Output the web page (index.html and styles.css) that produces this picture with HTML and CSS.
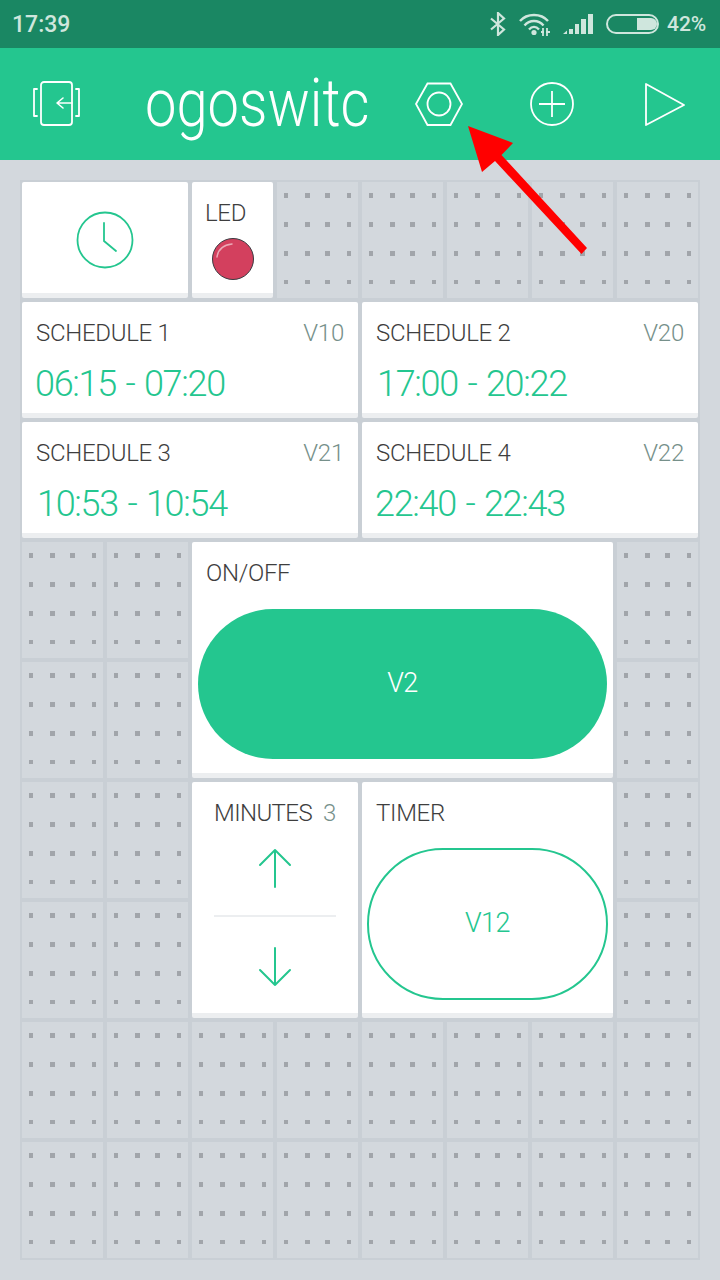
FILE: index.html
```html
<!DOCTYPE html>
<html lang="en">
<head>
<meta charset="utf-8">
<title>ogoswitc</title>
<link rel="stylesheet" href="styles.css">
</head>
<body>
<div class="status">
  <span class="clock-text">17:39</span>
  <svg class="st-bt" width="16" height="24" viewBox="0 0 16 24"><path d="M1 6.500 14 17.500 8 23V1l6 5.500L1 17.500" fill="none" stroke="currentColor" stroke-width="2.200"/></svg>
  <svg class="st-wifi" width="32" height="24" viewBox="0 0 32 24"><g fill="none" stroke="currentColor" stroke-width="2.400"><path d="M1 9C8 1 22 1 29 9"/><path d="M5.500 13.500C10.500 7.500 19.500 7.500 24.500 13.500"/><path d="M10 17.500C13 14 17 14 20 17.500"/></g><circle cx="15" cy="20.500" r="2.600" fill="currentColor"/><path d="M24 16v8M28 16v8M22 20h3M27 20h4" stroke="currentColor" stroke-width="1.800" fill="none"/></svg>
  <svg class="st-sig" width="31" height="22" viewBox="0 0 31 22"><path d="M0 21 4 17.500V21ZM6 16h4v5H6ZM12 11h4v10h-4ZM18 6h5v15h-5ZM25 1h5v20h-5Z" fill="currentColor"/></svg>
  <svg class="st-bat" width="54" height="21" viewBox="0 0 54 21"><rect x="1" y="1" width="51" height="18" rx="9" fill="none" stroke="currentColor" stroke-width="2"/><path d="M31 4h14a6 6 0 0 1 0 12H31Z" fill="currentColor"/></svg>
  <span class="pct">42%</span>
</div>

<header class="bar">
  <svg class="i-sync" width="47" height="46" viewBox="0 0 47 46"><g fill="none" stroke="#fff" stroke-width="1.800" stroke-linejoin="round" stroke-linecap="round"><rect x="8" y="1" width="31" height="43" rx="3"/><path d="M4 8H1V35H4M43 8h3V35h-3"/><path d="M39 22H24M30 17l-6 5 6 5" stroke-width="1.600"/></g></svg>
  <div class="title">ogoswitc</div>
  <svg class="i-hex" width="48" height="44" viewBox="0 0 48 44"><g fill="none" stroke="#fff" stroke-width="1.800"><path d="M1 22 12.500 1.500H35.500L47 22 35.500 43H12.500Z"/><circle cx="24" cy="22" r="11.500"/></g></svg>
  <svg class="i-plus" width="44" height="44" viewBox="0 0 44 44"><g fill="none" stroke="#fff" stroke-width="1.800"><circle cx="22" cy="22" r="21"/><path d="M9 22H35M22 9V35"/></g></svg>
  <svg class="i-play" width="42" height="44" viewBox="0 0 42 44"><path d="M2 2 40 23 2 43Z" fill="none" stroke="#fff" stroke-width="1.800" stroke-linejoin="round"/></svg>
</header>

<main class="board">
  <div class="card w2 center">
    <svg width="58" height="58" viewBox="0 0 58 58"><g fill="none" stroke="#24c68f" stroke-width="1.800" stroke-linecap="round"><circle cx="29" cy="29" r="27.500"/><path d="M28 12V30L40 40"/></g></svg>
  </div>
  <div class="card led">
    <div class="label">LED</div>
    <svg class="led-lamp" width="44" height="44" viewBox="0 0 44 44"><circle cx="22" cy="22" r="20.500" fill="#d3405e" stroke="#3a3a40" stroke-width="1"/><path d="M6 20C7 13 12 8 21 7" fill="none" stroke="#eba9b6" stroke-width="1.500" stroke-linecap="round"/></svg>
  </div>
  <div class="cell"></div><div class="cell"></div><div class="cell"></div><div class="cell"></div><div class="cell"></div>

  <div class="card w4 sched">
    <div class="sched-top"><span class="label">SCHEDULE 1</span><span class="pin">V10</span></div>
    <div class="time">06:15 - 07:20</div>
  </div>
  <div class="card w4 sched">
    <div class="sched-top"><span class="label">SCHEDULE 2</span><span class="pin">V20</span></div>
    <div class="time shift">17:00 - 20:22</div>
  </div>
  <div class="card w4 sched">
    <div class="sched-top"><span class="label">SCHEDULE 3</span><span class="pin">V21</span></div>
    <div class="time shift">10:53 - 10:54</div>
  </div>
  <div class="card w4 sched">
    <div class="sched-top"><span class="label">SCHEDULE 4</span><span class="pin">V22</span></div>
    <div class="time">22:40 - 22:43</div>
  </div>

  <div class="cell"></div><div class="cell"></div>
  <div class="card w5 h2 button-card">
    <div class="label">ON/OFF</div>
    <div class="pill solid">V2</div>
  </div>
  <div class="cell"></div>
  <div class="cell"></div><div class="cell"></div><div class="cell"></div>

  <div class="cell"></div><div class="cell"></div>
  <div class="card w2 h2 stepper">
    <div class="step-top"><span class="label">MINUTES</span><span class="pin">3</span></div>
    <svg class="arrow-up" width="34" height="40" viewBox="0 0 34 40"><path d="M17 39V2M2 17 17 2 32 17" fill="none" stroke="#24c68f" stroke-width="2" stroke-linecap="round" stroke-linejoin="round"/></svg>
    <div class="divider"></div>
    <svg class="arrow-down" width="34" height="40" viewBox="0 0 34 40"><path d="M17 1V38M2 23 17 38 32 23" fill="none" stroke="#24c68f" stroke-width="2" stroke-linecap="round" stroke-linejoin="round"/></svg>
  </div>
  <div class="card w3 h2 timer-card">
    <div class="label">TIMER</div>
    <div class="pill outline">V12</div>
  </div>
  <div class="cell"></div>
  <div class="cell"></div><div class="cell"></div><div class="cell"></div>

  <div class="cell"></div><div class="cell"></div><div class="cell"></div><div class="cell"></div><div class="cell"></div><div class="cell"></div><div class="cell"></div><div class="cell"></div>
  <div class="cell"></div><div class="cell"></div><div class="cell"></div><div class="cell"></div><div class="cell"></div><div class="cell"></div><div class="cell"></div><div class="cell"></div>
</main>

<svg class="pointer" width="130" height="135" viewBox="0 0 130 135"><path d="M2 0 47 17 35.500 29 121 122 115.500 128 29 35 16 46Z" fill="#ff0000"/></svg>
</body>
</html>
```
FILE: styles.css
```css
* { box-sizing: border-box; }
html, body { margin: 0; padding: 0; }
body {
  width: 720px;
  height: 1280px;
  overflow: hidden;
  position: relative;
  background: #d3d8dd;
  font-family: "Roboto", "Liberation Sans", sans-serif;
}

.status {
  height: 48px;
  background: #1a8763;
  color: #cfe6dd;
  display: flex;
  align-items: center;
  padding-left: 12px;
}
.clock-text { font-size: 23px; font-weight: 500; width: 478px; }
.st-bt { margin-right: 13px; }
.st-wifi { margin-right: 12px; }
.st-sig { margin-right: 12px; }
.st-bat { margin-right: 7px; }
.pct { font-size: 21px; font-weight: 500; }

.bar {
  height: 112px;
  background: #24c68f;
  display: flex;
  align-items: center;
  padding-left: 33px;
}
.title {
  width: 226px;
  margin-left: 65px;
  white-space: nowrap;
  color: #fff;
  font-size: 66px;
  font-weight: 300;
  line-height: 80px;
  transform: scaleX(0.85);
  transform-origin: left center;
}
.i-hex { margin-left: 44px; }
.i-plus { margin-left: 67px; }
.i-play { margin-left: 70px; }

.board {
  margin: 20px 0 0 20px;
  width: 680px;
  height: 1080px;
  padding: 2px;
  display: grid;
  grid-template-columns: repeat(8, 81px);
  grid-template-rows: repeat(9, 116px);
  gap: 4px;
  background: #c9cfd5;
}
.cell {
  background-color: #d3d8dd;
  background-image: url("data:image/svg+xml,%3Csvg xmlns='http://www.w3.org/2000/svg' width='81' height='116'%3E%3Cg fill='%23a1a5aa'%3E%3Cpath d='M7 11h4v5H7zM28 11h5v5h-5zM48 11h5v5h-5zM70 11h4v5h-4zM7 40h4v5H7zM28 40h5v5h-5zM48 40h5v5h-5zM70 40h4v5h-4zM7 69h4v5H7zM28 69h5v5h-5zM48 69h5v5h-5zM70 69h4v5h-4zM7 98h4v4H7zM28 98h5v4h-5zM48 98h5v4h-5zM70 98h4v4h-4z'/%3E%3C/g%3E%3C/svg%3E");
  background-repeat: no-repeat;
}
.card {
  background: #fff;
  border-bottom: 5px solid #eceef0;
  border-radius: 2px;
}
.w2 { grid-column: span 2; }
.w3 { grid-column: span 3; }
.w4 { grid-column: span 4; }
.w5 { grid-column: span 5; }
.h2 { grid-row: span 2; }
.center { display: flex; align-items: center; justify-content: center; padding-top: 4px; }

.label {
  font-size: 24px;
  font-weight: 300;
  color: #3e3e3e;
  line-height: 28px;
  letter-spacing: -0.300px;
}
.pin {
  font-size: 24px;
  font-weight: 300;
  color: #76908a;
  line-height: 28px;
  letter-spacing: -0.200px;
}

.led { padding: 17px 0 0 13px; }
.led-lamp { display: block; margin: 10px 0 0 6px; }

.sched { padding: 17px 14px 0; }
.sched-top { display: flex; justify-content: space-between; }
.time {
  margin-top: 15px;
  margin-left: -1px;
  color: #24c68f;
  font-size: 36px;
  font-weight: 300;
  letter-spacing: -1.300px;
  word-spacing: 2px;
  line-height: 44px;
}
.shift { padding-left: 2px; }

.button-card { padding: 17px 6px 0; display: flex; flex-direction: column; }
.button-card .label { padding-left: 8px; }
.pill {
  display: flex;
  align-items: center;
  justify-content: center;
  font-size: 27px;
  font-weight: 300;
  letter-spacing: -0.500px;
}
.solid {
  margin-top: 22px;
  height: 150px;
  border-radius: 75px;
  background: #24c68f;
  color: #fff;
  padding-bottom: 2px;
}
.timer-card { padding: 17px 5px 0; }
.timer-card .label { padding-left: 9px; }
.outline {
  margin-top: 21px;
  height: 152px;
  border-radius: 76px;
  border: 2px solid #24c68f;
  color: #24c68f;
  padding-bottom: 2px;
}

.stepper { padding: 17px 22px 0; display: flex; flex-direction: column; align-items: center; }
.step-top { width: 100%; display: flex; justify-content: space-between; }
.step-top .label { letter-spacing: -0.600px; }
.arrow-up { margin-top: 21px; }
.divider { width: 100%; height: 2px; background: #eceef0; margin: 27px 0 30px; }
.arrow-down { display: block; }

.pointer {
  position: absolute;
  left: 466px;
  top: 126px;
}
```
